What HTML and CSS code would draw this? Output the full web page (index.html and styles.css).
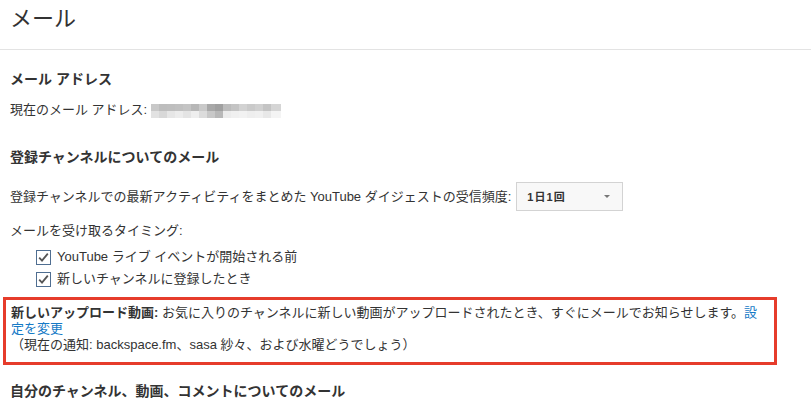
FILE: index.html
```html
<!DOCTYPE html>
<html lang="ja">

<head>
  <meta charset="UTF-8" />
  <meta name="viewport" content="width=device-width, initial-scale=1.0" />
  <title>メール</title>
  <link rel="stylesheet" href="styles.css">
</head>

<body>
  <div class="page-header">
    <h1 class="page-title">メール</h1>
  </div>

  <div class="content">
    <!-- Address -->
    <h2 class="section-title first">メール アドレス</h2>
    <div class="address-row">
      <span>現在のメール アドレス:</span>
      <span class="mosaic"></span>
    </div>

    <!-- Subscriptions -->
    <h2 class="section-title">登録チャンネルについてのメール</h2>
    <div class="digest-row">
      <span>登録チャンネルでの最新アクティビティをまとめた YouTube ダイジェストの受信頻度:</span>
      <div class="select">
        <span class="select-value">1 日 1 回</span>
        <span class="select-arrow"></span>
      </div>
    </div>

    <div class="timing-label">メールを受け取るタイミング:</div>
    <ul class="check-list">
      <li>
        <svg class="check" width="15" height="15" viewBox="0 0 15 15">
          <rect x="0.5" y="0.5" width="14" height="14" fill="#fff" stroke="#4f6e91" />
          <path d="M3.2 7.6 L6 10.6 L11.8 3.6" fill="none" stroke="#555" stroke-width="1.8" />
        </svg>
        <span>YouTube ライブ イベントが開始される前</span>
      </li>
      <li>
        <svg class="check" width="15" height="15" viewBox="0 0 15 15">
          <rect x="0.5" y="0.5" width="14" height="14" fill="#fff" stroke="#4f6e91" />
          <path d="M3.2 7.6 L6 10.6 L11.8 3.6" fill="none" stroke="#555" stroke-width="1.8" />
        </svg>
        <span>新しいチャンネルに登録したとき</span>
      </li>
    </ul>

    <div class="notice">
      <div><b>新しいアップロード動画:</b> お気に入りのチャンネルに新しい動画がアップロードされたとき、すぐにメールでお知らせします。<a href="#" class="link">設定を変更</a></div>
      <div>（現在の通知: backspace.fm、sasa 紗々、および水曜どうでしょう）</div>
    </div>

    <h2 class="section-title last">自分のチャンネル、動画、コメントについてのメール</h2>
  </div>
</body>

</html>
```

FILE: styles.css
```css
body {
  margin: 0;
  padding: 0;
  font-family: "Liberation Sans", "Noto Sans CJK JP", sans-serif;
  font-size: 13px;
  line-height: 16px;
  color: #333;
  background-color: white;
}

.page-header {
  height: 49px;
  border-bottom: 1px solid #e3e3e3;
  padding: 0 10px;
}

.page-title {
  margin: 0;
  padding-top: 5px;
  font-size: 22px;
  line-height: 28px;
  font-weight: normal;
  color: #333;
}

.content {
  padding: 0 10px;
}

.section-title {
  margin: 30px 0 0;
  font-size: 14px;
  line-height: 18px;
  font-weight: bold;
  color: #333;
}

.section-title.first {
  margin-top: 20px;
}

.section-title.last {
  margin-top: 17px;
}

.address-row {
  display: flex;
  align-items: center;
  gap: 4px;
  margin-top: 14px;
}

.mosaic {
  display: inline-block;
  width: 130px;
  height: 14px;
  margin-top: 2px;
  background:
    linear-gradient(to right,
      #c8c8c8 0 8px, #bdbdbd 8px 16px, #bebebe 16px 24px, #c0c0c0 24px 32px,
      #c4c4c4 32px 40px, #b7b7b7 40px 48px, #c9c9c9 48px 56px, #a8a8a8 56px 64px,
      #a0a0a0 64px 72px, #bcbcbc 72px 80px, #c4c4c4 80px 88px, #d2d2d2 88px 96px,
      #cacaca 96px 104px, #d0d0d0 104px 112px, #c4c4c4 112px 120px, #d5d5d5 120px 130px) top / 100% 7px no-repeat,
    linear-gradient(to right,
      #e2e2e2 0 8px, #d8d8d8 8px 16px, #e6e6e6 16px 24px, #ececec 24px 32px,
      #e4e4e4 32px 40px, #eeeeee 40px 48px, #dcdcdc 48px 56px, #c8c8c8 56px 64px,
      #b8b8b8 64px 72px, #ececec 72px 80px, #f0f0f0 80px 88px, #f2f2f2 88px 96px,
      #eeeeee 96px 104px, #f0f0f0 104px 112px, #e8e8e8 112px 120px, #f4f4f4 120px 130px) bottom / 100% 7px no-repeat;
}

.digest-row {
  display: flex;
  align-items: center;
  gap: 5px;
  margin-top: 16px;
}

.select {
  display: flex;
  align-items: center;
  justify-content: space-between;
  box-sizing: border-box;
  width: 107px;
  height: 29px;
  padding: 0 12px 0 10px;
  border: 1px solid #d3d3d3;
  background-color: #f8f8f8;
}

.select-value {
  font-size: 11px;
  font-weight: bold;
  color: #333;
  letter-spacing: -1px;
}

.select-arrow {
  width: 0;
  height: 0;
  border-left: 3px solid transparent;
  border-right: 3px solid transparent;
  border-top: 3px solid #777;
}

.timing-label {
  margin-top: 12px;
}

.check-list {
  list-style: none;
  margin: 7px 0 0;
  padding: 0 0 0 26px;
}

.check-list li {
  display: flex;
  align-items: center;
  gap: 6px;
  height: 22px;
}

.notice {
  margin: 7px 0 0 -7px;
  width: 749px;
  padding: 5px 14px 9px 5px;
  border: 3px solid #e63c2b;
}

.link {
  color: #167ac6;
  text-decoration: none;
}
```
